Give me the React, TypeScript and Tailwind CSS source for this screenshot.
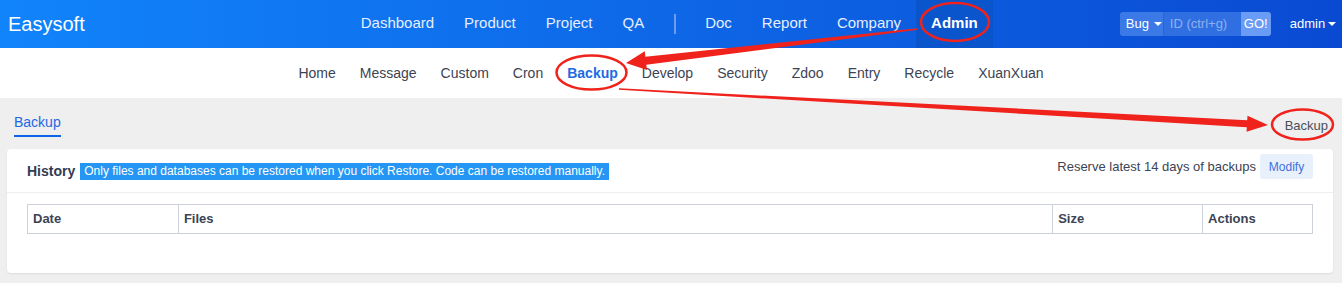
import React from "react";

type P = [number, number];

function arrowPoints(tail: P, tip: P, headLen: number, headHalf: number, tailHalf: number, baseHalf: number): string {
  const dx = tip[0] - tail[0];
  const dy = tip[1] - tail[1];
  const L = Math.hypot(dx, dy);
  const ux = dx / L, uy = dy / L;
  const nx = -uy, ny = ux;
  const bx = tip[0] - ux * headLen, by = tip[1] - uy * headLen;
  const pts: P[] = [
    [tail[0] + nx * tailHalf, tail[1] + ny * tailHalf],
    [bx + nx * baseHalf, by + ny * baseHalf],
    [bx + nx * headHalf, by + ny * headHalf],
    tip,
    [bx - nx * headHalf, by - ny * headHalf],
    [bx - nx * baseHalf, by - ny * baseHalf],
    [tail[0] - nx * tailHalf, tail[1] - ny * tailHalf],
  ];
  return pts.map((p) => `${p[0].toFixed(1)},${p[1].toFixed(1)}`).join(" ");
}

function Annotations() {
  return (
    <svg className="pointer-events-none absolute left-0 top-0" width="1342" height="283" viewBox="0 0 1342 283">
      <ellipse cx="955" cy="22" rx="34" ry="19" fill="none" stroke="#f0221c" strokeWidth="2.5" />
      <ellipse cx="591.5" cy="72.5" rx="35" ry="17" fill="none" stroke="#f0221c" strokeWidth="2.5" />
      <ellipse cx="1302.5" cy="124.5" rx="30.5" ry="15" fill="none" stroke="#f0221c" strokeWidth="2.5" />
      <polygon points={arrowPoints([918, 29], [626, 63], 20, 9.5, 0.8, 4)} fill="#f0221c" />
      <polygon points={arrowPoints([619, 89], [1268, 125], 21, 8, 0.7, 3.5)} fill="#f0221c" />
    </svg>
  );
}

const mainNav = ["Dashboard", "Product", "Project", "QA"];
const mainNav2 = ["Doc", "Report", "Company"];
const subNav = ["Home", "Message", "Custom", "Cron", "Backup", "Develop", "Security", "Zdoo", "Entry", "Recycle", "XuanXuan"];

export default function App() {
  return (
    <div
      className="relative h-[283px] w-[1342px] overflow-hidden bg-[#efefef] text-[#3c4353]"
      style={{ fontFamily: '"Liberation Sans", Arial, sans-serif' }}
    >
      {/* Header */}
      <div className="flex h-[48px] items-center bg-[linear-gradient(90deg,#1184fb_0%,#0e6ae8_45%,#0a4ad2_100%)] text-white">
        <div className="pl-[8px] text-[20px] leading-none">Easysoft</div>
        <div className="ml-[261px] flex h-full items-center text-[15px] text-[#e6eeff]">
          {mainNav.map((n) => (
            <div key={n} className="flex h-full items-center px-[15px] pb-[1px]">
              {n}
            </div>
          ))}
          <div className="flex h-full w-[31px] items-center justify-start pl-[15px]">
            <div className="h-[20px] w-[2px] bg-[#6d9df0]" />
          </div>
          {mainNav2.map((n) => (
            <div key={n} className="flex h-full items-center px-[15px] pb-[1px]">
              {n}
            </div>
          ))}
          <div className="flex h-full items-center bg-[#0a55cc] px-[15px] pb-[1px] font-bold text-white">Admin</div>
        </div>
        <div className="ml-[127px] flex h-[24px] items-stretch overflow-hidden rounded-[3px] text-[13px]">
          <div className="flex w-[43px] items-center gap-[5px] bg-[#3b7ae6] pl-[6px] text-white">
            Bug
            <span className="h-0 w-0 border-x-[4px] border-t-[4px] border-x-transparent border-t-white" />
          </div>
          <div className="flex w-[78px] items-center border-l border-[#2a63d4] bg-[#2f6fe2] pl-[6px] text-[#8fb0ee]">ID (ctrl+g)</div>
          <div className="flex w-[30px] items-center justify-center bg-[#6b9cf5] text-white">GO!</div>
        </div>
        <div className="ml-[19px] flex items-center gap-[3px] text-[13px] text-white">
          admin
          <span className="h-0 w-0 border-x-[4px] border-t-[4px] border-x-transparent border-t-white" />
        </div>
      </div>

      {/* Sub nav */}
      <div className="flex h-[50px] items-center justify-center bg-white text-[14px] text-[#3c4353]">
        {subNav.map((n) => (
          <div key={n} className={`px-[12px] ${n === "Backup" ? "font-bold text-[#1d6ae5]" : ""}`}>
            {n}
          </div>
        ))}
      </div>

      {/* Tab bar */}
      <div className="flex h-[51px] items-start justify-between px-[14px]">
        <div className="mt-[16px] flex flex-col">
          <span className="text-[14px] leading-[16px] text-[#2467e6]">Backup</span>
          <span className="mt-[5px] h-[2px] w-full bg-[#0c64eb]" />
        </div>
        <div className="mt-[18px] text-[13px] text-[#4a4f5c]">Backup</div>
      </div>

      {/* Card */}
      <div className="mx-[7px] h-[124px] w-[1326px] rounded-[4px] bg-white shadow-[0_1px_2px_rgba(0,0,0,0.08)]">
        <div className="flex h-[44px] items-center justify-between border-b border-[#eceef2] pl-[20px] pr-[20px]">
          <div className="flex items-center gap-[5px] pt-[1px]">
            <span className="text-[14px] font-bold text-[#313c52]">History</span>
            <span className="flex h-[17px] items-center bg-[#2596f3] px-[4px] text-[12px] text-white">
              Only files and databases can be restored when you click Restore. Code can be restored manually.
            </span>
          </div>
          <div className="mt-[5px] flex items-center gap-[4px] self-start">
            <span className="text-[13px] text-[#3c4353]">Reserve latest 14 days of backups</span>
            <span className="flex h-[25px] w-[53px] items-center justify-center rounded-[3px] bg-[#e8f0fc] text-[12px] text-[#3f6fe0]">
              Modify
            </span>
          </div>
        </div>
        <div className="px-[20px] pt-[11px]">
          <table className="w-[1286px] border-collapse text-[13px] font-bold text-[#3c4353]">
            <thead>
              <tr className="h-[29px]">
                <th className="w-[151px] border border-[#cbd0db] px-[5px] text-left">Date</th>
                <th className="w-[875px] border border-[#cbd0db] px-[5px] text-left">Files</th>
                <th className="w-[150px] border border-[#cbd0db] px-[5px] text-left">Size</th>
                <th className="w-[110px] border border-[#cbd0db] px-[5px] text-left">Actions</th>
              </tr>
            </thead>
          </table>
        </div>
      </div>

      <Annotations />
    </div>
  );
}
